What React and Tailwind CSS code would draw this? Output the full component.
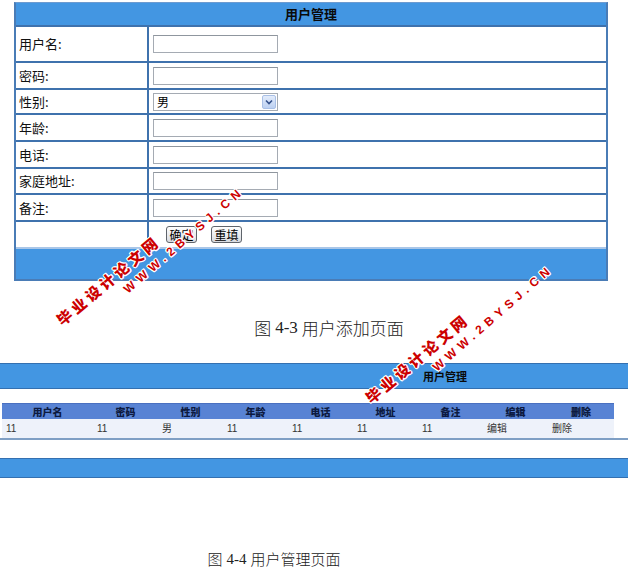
import React from "react";

const cjk = { fontFamily: '"Noto Sans CJK SC", "Liberation Sans", sans-serif' };

function TextInput() {
  return <div className="h-[18px] w-[125px] border border-[#a5abb3] border-t-[#8f969e] bg-white" />;
}

function SelectBox() {
  return (
    <div className="flex h-[18px] w-[125px] items-center justify-between border border-[#a5abb3] bg-white pl-[3px] pr-[1px]">
      <span className="text-[12px] leading-none text-black">男</span>
      <div className="flex h-[14px] w-[14px] items-center justify-center rounded-[2px] border border-[#a9c0e6] bg-gradient-to-b from-[#e3ecfb] to-[#bcd0f1]">
        <svg width="8" height="6" viewBox="0 0 8 6">
          <path d="M1 1.5 L4 4.5 L7 1.5" fill="none" stroke="#33508a" strokeWidth="1.6" />
        </svg>
      </div>
    </div>
  );
}

function Row({ label, h, children }) {
  return (
    <div className="flex border-t-2 border-[#3f72ad]" style={{ height: h }}>
      <div className="flex w-[133px] shrink-0 items-center border-r-2 border-[#3f72ad] pl-[3px] text-[13px] text-[#111]">
        {label}
      </div>
      <div className="flex flex-1 items-center pl-[4px]">{children}</div>
    </div>
  );
}

function Btn({ children }) {
  return (
    <div className="flex h-[17px] w-[31px] items-center justify-center rounded-[3px] border border-[#5f646b] bg-gradient-to-b from-[#ffffff] to-[#d8dbe0] text-[12px] leading-none text-black">
      {children}
    </div>
  );
}

const outline =
  "[text-shadow:1px_1px_0_#fff,-1px_-1px_0_#fff,1px_-1px_0_#fff,-1px_1px_0_#fff,0_1px_0_#fff,0_-1px_0_#fff,1px_0_0_#fff,-1px_0_0_#fff]";

function Watermark({ x, y }) {
  return (
    <>
      <div
        className={`pointer-events-none absolute -translate-x-1/2 -translate-y-1/2 -rotate-[40deg] whitespace-nowrap text-[15px] font-black leading-none tracking-[3.5px] text-[#cc0000] ${outline}`}
        style={{ left: x, top: y, ...cjk }}
      >
        毕业设计论文网
      </div>
      <div
        className={`pointer-events-none absolute -translate-x-1/2 -translate-y-1/2 -rotate-[41deg] whitespace-nowrap text-[12px] font-bold leading-none tracking-[5px] text-[#cc0000] ${outline}`}
        style={{ left: x + 76, top: y - 40, fontFamily: '"Liberation Sans", Arial, sans-serif' }}
      >
        WWW.2BYSJ.CN
      </div>
    </>
  );
}

const cols = [
  { h: "用户名", d: "11", w: 91 },
  { h: "密码", d: "11", w: 65 },
  { h: "性别", d: "男", w: 65 },
  { h: "年龄", d: "11", w: 65 },
  { h: "电话", d: "11", w: 65 },
  { h: "地址", d: "11", w: 65 },
  { h: "备注", d: "11", w: 65 },
  { h: "编辑", d: "编辑", w: 65 },
  { h: "删除", d: "删除", w: 66 },
];

export default function App() {
  return (
    <div className="relative h-[586px] w-[628px] overflow-hidden bg-white" style={cjk}>
      {/* Top: user add form */}
      <div className="ml-[14px] mt-[2px] w-[594px] border-x-2 border-b-2 border-t border-[#4a7cb6] border-t-[#6d9bd0]">
        <div className="flex h-[22px] items-center justify-center bg-[#4396e2] text-[13px] font-bold text-[#0a0a0a]">
          用户管理
        </div>
        <Row label="用户名:" h={36}>
          <TextInput />
        </Row>
        <Row label="密码:" h={27}>
          <TextInput />
        </Row>
        <Row label="性别:" h={25}>
          <SelectBox />
        </Row>
        <Row label="年龄:" h={27}>
          <TextInput />
        </Row>
        <Row label="电话:" h={27}>
          <TextInput />
        </Row>
        <Row label="家庭地址:" h={26}>
          <TextInput />
        </Row>
        <Row label="备注:" h={27}>
          <TextInput />
        </Row>
        <Row label="" h={27}>
          <div className="flex gap-[14px] pl-[13px]">
            <Btn>确定</Btn>
            <Btn>重填</Btn>
          </div>
        </Row>
        <div className="h-[32px] border-t-2 border-[#a9c6e8] bg-[#4396e2]" />
      </div>

      {/* caption 1 */}
      <div className="mt-[35px] flex h-[24px] items-center justify-center pl-[30px] text-[17px] text-[#222]">
        <span className="font-light">图</span>
        <span className="mx-[4px]" style={{ fontFamily: '"Liberation Serif", serif' }}>4-3</span>
        <span className="font-light">用户添加页面</span>
      </div>

      {/* Bottom: user management list */}
      <div className="mt-[23px] flex h-[26px] items-center border-y border-y-[#3470b0] bg-[#4396e2] pl-[423px] text-[11px] font-bold text-[#0a0a0a]">
        用户管理
      </div>

      <div className="ml-[2px] mt-[14px] w-[612px]">
        <div className="flex h-[16px] items-center border-t border-[#4a70c0] bg-[#5883d4]">
          {cols.map((c, i) => (
            <div
              key={i}
              className="text-center text-[10px] font-black leading-none text-[#0c1a40]"
              style={{ width: c.w }}
            >
              {c.h}
            </div>
          ))}
        </div>
        <div className="flex h-[19px] items-center bg-[#eef2fa]">
          {cols.map((c, i) => (
            <div
              key={i}
              className="pl-[4px] text-[10px] leading-none text-[#333]"
              style={{ width: c.w, fontFamily: '"Liberation Sans", "Noto Sans CJK SC", sans-serif' }}
            >
              {c.d}
            </div>
          ))}
        </div>
      </div>
      <div className="h-[2px] w-full bg-[#7f9fc4]" />

      <div className="mt-[18px] h-[20px] border-y border-y-[#3470b0] bg-[#4396e2]" />

      {/* caption 2 */}
      <div className="mt-[70px] flex h-[22px] items-center justify-center text-[15px] text-[#222]" style={{ marginLeft: -80 }}>
        <span className="font-light">图</span>
        <span className="mx-[4px]" style={{ fontFamily: '"Liberation Serif", serif' }}>4-4</span>
        <span className="font-light">用户管理页面</span>
      </div>

      <Watermark x={108} y={280} />
      <Watermark x={417} y={358} />
    </div>
  );
}
